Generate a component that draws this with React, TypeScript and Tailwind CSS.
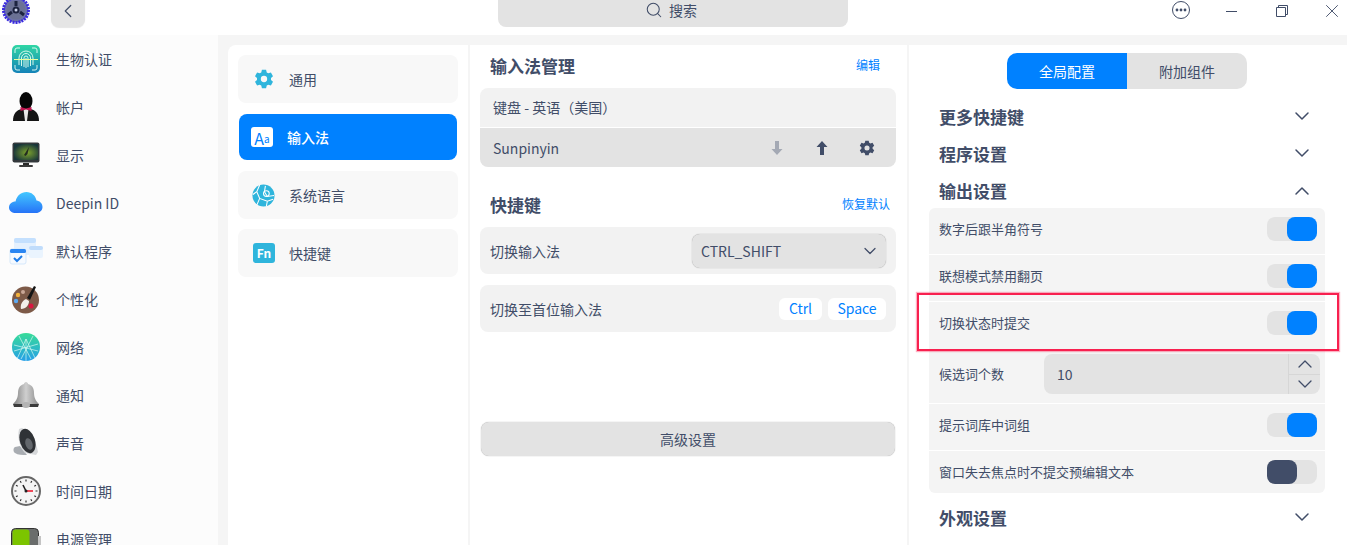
import React from "react";
import { ChevronDown, ChevronLeft, ChevronUp, Search, X } from "lucide-react";

const FingerprintIcon = () => (
  <svg viewBox="0 0 28 28" className="w-[28px] h-[28px]">
    <defs>
      <linearGradient id="fp" x1="0" y1="0" x2="0" y2="1">
        <stop offset="0" stopColor="#2fd6a4" />
        <stop offset="1" stopColor="#1583b8" />
      </linearGradient>
    </defs>
    <rect x="0" y="0" width="28" height="28" rx="5" fill="url(#fp)" />
    <g fill="none" stroke="#eafff4" strokeWidth="1" opacity="0.9">
      <path d="M7 20v-7a7 7 0 0 1 14 0v7" />
      <path d="M9.5 21v-8a4.5 4.5 0 0 1 9 0v8" />
      <path d="M12 22v-9a2 2 0 0 1 4 0v9" />
      <path d="M14 13v10" />
      <path d="M3 8V5a2 2 0 0 1 2-2h3M20 3h3a2 2 0 0 1 2 2v3M3 20v3a2 2 0 0 0 2 2h3M25 20v3a2 2 0 0 1-2 2h-3" />
    </g>
    <rect x="2" y="14" width="24" height="1" fill="#e8ff9c" />
  </svg>
);

const AccountIcon = () => (
  <svg viewBox="0 0 28 30" className="w-[28px] h-[30px]">
    <ellipse cx="14" cy="9" rx="6.5" ry="9" fill="#060606" />
    <path d="M1 29c0-7 3-11 9-12h8c6 1 9 5 9 12z" fill="#151515" />
    <path d="M11.5 17h5l-1.500 12h-2z" fill="#e8e8e8" />
    <path d="M8.5 15l5.500 1.500 5.500-1.500v4l-5.500-1.500-5.500 1.500z" fill="#c2134f" />
  </svg>
);

const DisplayIcon = () => (
  <svg viewBox="0 0 28 26" className="w-[28px] h-[26px]">
    <defs>
      <radialGradient id="scr" cx="0.55" cy="0.55" r="0.6">
        <stop offset="0" stopColor="#7fa52c" />
        <stop offset="1" stopColor="#17353a" />
      </radialGradient>
    </defs>
    <rect x="0.5" y="0.5" width="27" height="20" rx="2" fill="#33383b" />
    <rect x="2" y="2" width="24" height="16" fill="url(#scr)" />
    <path d="M12 13l5-8-1.5 7-2 2z" fill="#232c20" />
    <rect x="11" y="21" width="6" height="2" fill="#2a2a2a" />
    <rect x="7" y="23" width="14" height="2" rx="1" fill="#3b3b3b" />
  </svg>
);

const CloudIcon = () => (
  <svg viewBox="0 0 34 24" className="w-[34px] h-[24px]">
    <defs>
      <linearGradient id="cl" x1="0" y1="0" x2="0" y2="1">
        <stop offset="0" stopColor="#43c8ff" />
        <stop offset="1" stopColor="#2673f7" />
      </linearGradient>
    </defs>
    <path
      d="M7 22C3 22 0 20 0 16.5 0 13 3 10.500 6.500 10.500 8 4.500 12 1 17.500 1c5 0 9 3.500 10 8.500 3.500.5 6 3 6 6.500 0 3.500-3 6-6.500 6z"
      fill="url(#cl)"
    />
  </svg>
);

const DefaultAppIcon = () => (
  <svg viewBox="0 0 34 28" className="w-[34px] h-[28px]">
    <rect x="5" y="1" width="22" height="17" rx="2" fill="#e5f1fe" />
    <rect x="5" y="1" width="22" height="5" rx="2" fill="#c4e0fe" />
    <rect x="20" y="9" width="14" height="12" rx="2" fill="#eaf4fe" />
    <rect x="20" y="9" width="14" height="4" rx="2" fill="#c0dcfb" />
    <rect x="1" y="12" width="16" height="15" rx="2" fill="#f6faff" stroke="#d5e8fb" />
    <rect x="1" y="12" width="16" height="4" rx="1.500" fill="#2b86f2" />
    <path d="M5 21l3 3 5-5" fill="none" stroke="#1f7ce8" strokeWidth="2" />
  </svg>
);

const PaletteIcon = () => (
  <svg viewBox="0 0 30 30" className="w-[30px] h-[30px]">
    <circle cx="14.500" cy="16" r="13.500" fill="#7d5a48" />
    <circle cx="7" cy="11" r="2.200" fill="#f2b13c" />
    <circle cx="12" cy="8" r="2" fill="#c9a796" />
    <circle cx="5" cy="17" r="2.200" fill="#5da9f0" />
    <circle cx="20" cy="22" r="2.500" fill="#d9163f" />
    <path d="M10 25c-1-4 1-8 5-10l3 2c0 4-3 8-8 8z" fill="#f3efe9" />
    <path d="M16 14l7-12 2 1-6 13z" fill="#151515" />
  </svg>
);

const NetworkIcon = () => (
  <svg viewBox="0 0 28 28" className="w-[28px] h-[28px]">
    <defs>
      <linearGradient id="net" x1="0" y1="0" x2="0" y2="1">
        <stop offset="0" stopColor="#38dc98" />
        <stop offset="1" stopColor="#259fe8" />
      </linearGradient>
    </defs>
    <circle cx="14" cy="14" r="14" fill="url(#net)" />
    <g stroke="#e8fff6" strokeWidth="0.7" opacity="0.9">
      <path d="M14 6L5 26M14 6l9 19M2 12l24 6M2 18l24-7M7 3l12 23M21 3L9 26M14 6v22" />
    </g>
  </svg>
);

const BellIcon = () => (
  <svg viewBox="0 0 28 28" className="w-[28px] h-[28px]">
    <defs>
      <linearGradient id="bell" x1="0" y1="0" x2="1" y2="0">
        <stop offset="0" stopColor="#7f7f7f" />
        <stop offset="0.5" stopColor="#cfcfcf" />
        <stop offset="1" stopColor="#8a8a8a" />
      </linearGradient>
    </defs>
    <path d="M14 1c1 0 2 1 2 2 4 1 6 4 6 9 0 6 3 9 5 11H1c2-2 5-5 5-11 0-5 2-8 6-9 0-1 1-2 2-2z" fill="url(#bell)" />
    <path d="M1 23h26l-1 3H2z" fill="#3c3c3c" />
    <ellipse cx="14" cy="24" rx="4" ry="3" fill="#b4b4b4" />
  </svg>
);

const SpeakerIcon = () => (
  <svg viewBox="0 0 28 30" className="w-[28px] h-[30px]">
    <path d="M8 18l-5 1c-2 1-2 5 0 6 3 2 7 2 12 2z" fill="#a9adb2" />
    <path d="M7 1l3-1c7 3 14 12 16 24l-2 3-11-2C8 20 5 10 7 1z" fill="#d6d8da" />
    <ellipse cx="15.500" cy="13" rx="7.500" ry="12.500" transform="rotate(-18 15.500 13)" fill="#2f3236" />
    <ellipse cx="17" cy="16" rx="3.500" ry="6" transform="rotate(-18 17 16)" fill="#63676c" />
  </svg>
);

const ClockIcon = () => (
  <svg viewBox="0 0 30 30" className="w-[30px] h-[30px]">
    <circle cx="15" cy="15" r="14" fill="#f5f5f5" stroke="#676767" strokeWidth="2" />
    <g stroke="#333" strokeWidth="1.200">
      <path d="M15 3.500v2M15 24.500v2M3.500 15h2M24.500 15h2M9.200 5l1 1.700M20.800 5l-1 1.700M5 9.200l1.700 1M25 9.200l-1.700 1M5 20.800l1.700-1M25 20.800l-1.700-1M9.200 25l1-1.700M20.800 25l-1-1.700" />
    </g>
    <path d="M15 15l-3-6" stroke="#222" strokeWidth="1.600" />
    <path d="M15 15h7" stroke="#f0495a" strokeWidth="2" />
    <circle cx="15" cy="15" r="1.500" fill="#222" />
  </svg>
);

const BatteryIcon = () => (
  <svg viewBox="0 0 30 28" className="w-[30px] h-[28px] mt-[5px]">
    <rect x="0.5" y="0.5" width="27" height="27" rx="4" fill="#6a6d6c" stroke="#333" />
    <rect x="1.500" y="1.500" width="17" height="25" rx="3" fill="#7cc400" />
    <rect x="27" y="8" width="3" height="12" fill="#c4c4c4" />
  </svg>
);

const navItems: { label: string; icon: React.ReactNode }[] = [
  { label: "生物认证", icon: <FingerprintIcon /> },
  { label: "帐户", icon: <AccountIcon /> },
  { label: "显示", icon: <DisplayIcon /> },
  { label: "Deepin ID", icon: <CloudIcon /> },
  { label: "默认程序", icon: <DefaultAppIcon /> },
  { label: "个性化", icon: <PaletteIcon /> },
  { label: "网络", icon: <NetworkIcon /> },
  { label: "通知", icon: <BellIcon /> },
  { label: "声音", icon: <SpeakerIcon /> },
  { label: "时间日期", icon: <ClockIcon /> },
  { label: "电源管理", icon: <BatteryIcon /> },
];

const GearGlyph = ({ className }: { className: string }) => (
  <svg viewBox="0 0 24 24" className={className}>
    <path
      fill="currentColor"
      fillRule="evenodd"
      d="M9.500 1h5l.8 3.200 1.800 1 3.200-.9 2.500 4.300-2.400 2.300v2.200l2.400 2.300-2.500 4.300-3.200-.9-1.800 1-.8 3.200h-5l-.8-3.200-1.800-1-3.200.9-2.500-4.300 2.400-2.300v-2.200L1.200 8.600l2.500-4.300 3.200.9 1.800-1zM12 8.200a3.800 3.800 0 1 0 0 7.600 3.800 3.800 0 0 0 0-7.600z"
    />
  </svg>
);

const GlobeGlyph = () => (
  <svg viewBox="0 0 24 24" className="w-[23px] h-[23px]">
    <circle cx="12" cy="12" r="11.500" fill="#2fb5dc" />
    <g fill="none" stroke="#fff" strokeWidth="1.100">
      <path d="M8 1L5 8l3 7 8 3 6-2M5 8L1 11M8 15l-3 7M16 18l-1 5M14 2l-1 6 3 5 7-1" />
      <circle cx="15" cy="10" r="3" />
    </g>
  </svg>
);

const Toggle = ({ on = true }: { on?: boolean }) => (
  <div className={`flex w-[50px] h-[24px] rounded-[8px] bg-[#e3e3e3] shrink-0 ${on ? "justify-end" : "justify-start"}`}>
    <div className={`w-[30px] h-[24px] rounded-[8px] ${on ? "bg-[#0081ff]" : "bg-[#414d68]"}`} />
  </div>
);

const SettingRow = ({ label, className, last }: { label: string; className: string; last?: boolean }) => (
  <div className={`flex items-center justify-between pl-[10px] pr-[8px] text-[13px] ${className} ${last ? "" : "border-b border-white"}`}>
    <span>{label}</span>
    <Toggle on={!last} />
  </div>
);

const SectionHeader = ({ label, open, className }: { label: string; open?: boolean; className: string }) => (
  <div className={`flex items-center justify-between pl-[10px] pr-[11px] ${className}`}>
    <span className="text-[17px] font-bold leading-none">{label}</span>
    {open ? <ChevronUp size={24} strokeWidth={1.500} /> : <ChevronDown size={24} strokeWidth={1.500} className="-mt-[2px]" />}
  </div>
);

export default function App() {
  return (
    <div className="relative w-[1347px] h-[545px] overflow-hidden bg-[#f5f5f5] text-[#414d68] font-['Noto_Sans_CJK_SC','Noto_Sans',sans-serif]">
      <header className="flex items-end h-[35px] pb-[8px] bg-white overflow-hidden">
        <svg viewBox="0 0 28 28" className="w-[28px] h-[28px] ml-[2px] mb-[3px] shrink-0">
          <circle cx="14" cy="14" r="12.500" fill="#6d72a8" stroke="#3a2be0" strokeWidth="3" strokeDasharray="2 1" />
          <circle cx="14" cy="14" r="9.500" fill="#6b7194" />
          <circle cx="14" cy="14" r="3.500" fill="#1d2340" />
          <circle cx="14" cy="14" r="1.500" fill="#c9cfe8" />
          <path d="M14 5v5M6 19l4-3M22 19l-4-3" stroke="#1d2340" strokeWidth="3" />
        </svg>
        <button className="flex items-center justify-center w-[34px] h-[40px] ml-[21px] pt-[8px] rounded-[8px] bg-[#e5e5e5] shadow-[0_1px_1px_rgba(0,0,0,0.1)]">
          <ChevronLeft size={22} strokeWidth={1.300} />
        </button>
        <div className="flex items-center justify-center gap-[6px] w-[350px] h-[40px] ml-[413px] pt-[6px] pr-[4px] rounded-[8px] bg-[#e3e3e3] text-[14px]">
          <Search size={18} strokeWidth={1.400} />
          <span>搜索</span>
        </div>
        <div className="flex items-center h-[20px] ml-[323px] mb-[6px]">
          <svg viewBox="0 0 20 20" className="w-[20px] h-[20px] mb-[2px]">
            <circle cx="10" cy="10" r="8.500" fill="none" stroke="currentColor" strokeWidth="1" />
            <circle cx="6" cy="10" r="1.400" fill="currentColor" />
            <circle cx="10" cy="10" r="1.400" fill="currentColor" />
            <circle cx="14" cy="10" r="1.400" fill="currentColor" />
          </svg>
          <div className="w-[11px] h-px ml-[35px] bg-current" />
          <svg viewBox="0 0 12 12" className="w-[12px] h-[12px] ml-[39px]">
            <path d="M.5 2.500h9v9h-9zM2.500 2.500V.5h9v9H9.500" fill="none" stroke="currentColor" strokeWidth="1" />
          </svg>
          <X size={22} strokeWidth={1} className="ml-[33px]" />
        </div>
      </header>

      <div className="flex h-[510px]">
        <nav className="w-[218px] shrink-0 bg-[#fcfcfc] text-[14px]">
          {navItems.map((item) => (
            <div key={item.label} className="flex items-center h-[48px]">
              <div className="flex items-center justify-center w-[52px] shrink-0">{item.icon}</div>
              <span className="ml-[4px]">{item.label}</span>
            </div>
          ))}
        </nav>

        <section className="flex flex-col w-[240px] ml-[10px] mt-[10px] p-[10px] rounded-tl-[8px] bg-white text-[14px]">
          <div className="flex items-center h-[48px] rounded-[8px] bg-[#f8f8f8]">
            <GearGlyph className="w-[20px] h-[20px] ml-[16px] text-[#2fb5dc]" />
            <span className="ml-[15px]">通用</span>
          </div>
          <div className="flex items-center h-[46px] mx-[1px] mt-[11px] rounded-[8px] bg-[#0081ff] text-white">
            <div className="flex items-end justify-center w-[22px] h-[20px] ml-[12px] rounded-[3px] bg-white text-[#0081ff] leading-none">
              <span className="text-[16px] leading-[18px]">A</span>
              <span className="text-[10px] leading-[16px]">a</span>
            </div>
            <span className="ml-[14px] font-medium">输入法</span>
          </div>
          <div className="flex items-center h-[48px] mt-[11px] rounded-[8px] bg-[#f8f8f8]">
            <div className="ml-[14px]"><GlobeGlyph /></div>
            <span className="ml-[14px]">系统语言</span>
          </div>
          <div className="flex items-center h-[48px] mt-[10px] rounded-[8px] bg-[#f8f8f8]">
            <div className="flex items-center justify-center w-[22px] h-[20px] ml-[15px] rounded-[3px] bg-[#2fb5dc] text-white text-[12px] font-bold">Fn</div>
            <span className="ml-[14px]">快捷键</span>
          </div>
        </section>

        <section className="flex flex-col w-[437px] ml-[2px] mt-[10px] pl-[10px] pr-[11px] bg-white text-[14px]">
          <div className="flex items-center justify-between h-[43px] pb-[1px] px-[10px]">
            <span className="text-[17px] font-bold">输入法管理</span>
            <span className="text-[12px] text-[#0081ff] pr-[6px] pb-[3px]">编辑</span>
          </div>
          <div className="rounded-[8px] overflow-hidden">
            <div className="flex items-center h-[40px] pl-[13px] bg-[#f2f2f2] border-b border-white">键盘 - 英语（美国）</div>
            <div className="flex items-center h-[39px] pl-[13px] pr-[21px] bg-[#e3e3e3]">
              <span className="flex-1 pt-[1px]">Sunpinyin</span>
              <svg viewBox="0 0 12 14" className="w-[12px] h-[14px] text-[#a4a9b4]">
                <path d="M4 0h4v8h3.500L6 14 .5 8H4z" fill="currentColor" />
              </svg>
              <svg viewBox="0 0 12 14" className="w-[12px] h-[14px] ml-[33px]">
                <path d="M4 14h4V6h3.500L6 0 .5 6H4z" fill="currentColor" />
              </svg>
              <GearGlyph className="w-[16px] h-[16px] ml-[31px]" />
            </div>
          </div>
          <div className="flex items-center justify-between h-[34px] mt-[21px] pl-[10px] pr-[6px]">
            <span className="text-[17px] font-bold">快捷键</span>
            <span className="text-[12px] text-[#0081ff] pb-[2px]">恢复默认</span>
          </div>
          <div className="flex items-center justify-between h-[47px] mt-[5px] px-[10px] rounded-[8px] bg-[#f2f2f2]">
            <span className="pt-[1px]">切换输入法</span>
            <div className="flex items-center justify-between w-[194px] h-[34px] pl-[9px] pr-[6px] rounded-[8px] bg-[#e3e3e3] shadow-[0_0_1px_rgba(0,0,0,0.4)]">
              <span className="pt-[1px]">CTRL_SHIFT</span>
              <ChevronDown size={20} strokeWidth={1.500} />
            </div>
          </div>
          <div className="flex items-center h-[47px] mt-[11px] px-[10px] rounded-[8px] bg-[#f2f2f2]">
            <span className="flex-1 pt-[1px]">切换至首位输入法</span>
            <span className="flex items-center justify-center w-[43px] h-[22px] rounded-[6px] bg-white text-[#0081ff]">Ctrl</span>
            <span className="flex items-center justify-center w-[58px] h-[22px] ml-[6px] rounded-[6px] bg-white text-[#0081ff]">Space</span>
          </div>
          <button className="h-[34px] mt-[90px] mx-[1px] rounded-[8px] bg-[#e3e3e3] shadow-[0_0_1px_rgba(0,0,0,0.4)] text-[14px]">高级设置</button>
        </section>

        <section className="flex flex-col w-[438px] ml-[2px] mt-[10px] pl-[20px] pr-[22px] bg-white">
          <div className="flex self-center h-[36px] mt-[8px] rounded-[10px] overflow-hidden text-[14px]">
            <div className="flex items-center justify-center w-[120px] bg-[#0081ff] text-white">全局配置</div>
            <div className="flex items-center justify-center w-[120px] bg-[#e3e3e3]">附加组件</div>
          </div>
          <SectionHeader label="更多快捷键" className="h-[37px] mt-[9px]" />
          <SectionHeader label="程序设置" className="h-[37px]" />
          <SectionHeader label="输出设置" open className="h-[37px]" />
          <div className="-mt-[1px] rounded-[6px] bg-[#f4f4f4] overflow-hidden">
            <SettingRow label="数字后跟半角符号" className="h-[47px] pb-[4px]" />
            <SettingRow label="联想模式禁用翻页" className="h-[47px] pb-[4px]" />
            <SettingRow label="切换状态时提交" className="h-[49px] pb-[6px]" />
            <div className="flex items-center h-[53px] pb-[6px] pl-[10px] pr-[5px] border-b border-white text-[13px]">
              <span className="w-[105px] shrink-0">候选词个数</span>
              <div className="flex flex-1 h-[40px] rounded-[8px] bg-[#e3e3e3] overflow-hidden">
                <span className="flex-1 flex items-center pl-[13px] text-[14px]">10</span>
                <div className="flex flex-col w-[32px] border-l border-[#d6d6d6]">
                  <div className="flex flex-1 items-center justify-center border-b border-[#d6d6d6] overflow-hidden"><ChevronUp size={24} strokeWidth={1.300} className="shrink-0" /></div>
                  <div className="flex flex-1 items-center justify-center overflow-hidden"><ChevronDown size={24} strokeWidth={1.300} className="shrink-0" /></div>
                </div>
              </div>
            </div>
            <SettingRow label="提示词库中词组" className="h-[47px] pb-[4px]" />
            <SettingRow label="窗口失去焦点时不提交预编辑文本" className="h-[42px]" last />
          </div>
          <SectionHeader label="外观设置" className="h-[37px] mt-[6px]" />
        </section>
      </div>

      <div className="absolute left-[917px] top-[293px] w-[422px] h-[58px] border-2 border-[#f8204f] shadow-[0_0_1px_1px_rgba(248,32,79,0.35)]" />
    </div>
  );
}
